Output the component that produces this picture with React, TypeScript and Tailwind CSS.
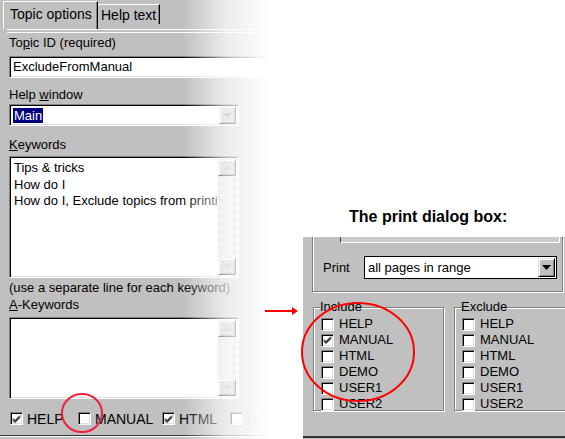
import React from 'react';

const sunken =
  'border border-t-[#808080] border-l-[#808080] border-r-white border-b-white shadow-[inset_1px_1px_0_#000,inset_-1px_-1px_0_#dfdfdf]';
const raised =
  'bg-[#c0c0c0] border border-t-[#dfdfdf] border-l-[#dfdfdf] border-r-black border-b-black shadow-[inset_1px_1px_0_#fff,inset_-1px_-1px_0_#808080]';

function Arrow({ dir, color }: { dir: 'up' | 'down'; color: string }) {
  return (
    <svg width="9" height="5" viewBox="0 0 9 5">
      {dir === 'up' ? (
        <polygon points="4.5,0 9,5 0,5" fill={color} />
      ) : (
        <polygon points="0,0 9,0 4.5,5" fill={color} />
      )}
    </svg>
  );
}

function Check({ checked }: { checked?: boolean }) {
  return (
    <span className={`w-[13px] h-[13px] shrink-0 bg-white flex items-center justify-center ${sunken}`}>
      {checked && (
        <svg width="9" height="8" viewBox="0 0 9 8">
          <path d="M1 3.5 L3 5.5 L8 0.5 M1 4.5 L3 6.5 L8 1.5 M1 5.5 L3 7.5 L8 2.5" stroke="#000" strokeWidth="1" fill="none" />
        </svg>
      )}
    </span>
  );
}

function Scrollbar() {
  return (
    <div className="w-[18px] h-full flex flex-col [background:repeating-conic-gradient(#c0c0c0_0%_25%,#fff_0%_50%)_0_0/2px_2px]">
      <div className={`h-[17px] flex items-center justify-center ${raised}`}>
        <Arrow dir="up" color="#a0a0a0" />
      </div>
      <div className="flex-1" />
      <div className={`h-[17px] flex items-center justify-center ${raised}`}>
        <Arrow dir="down" color="#a0a0a0" />
      </div>
    </div>
  );
}

const leftChecks = [
  { label: 'HELP', checked: true, w: 'w-[68px]' },
  { label: 'MANUAL', checked: false, w: 'w-[84px]' },
  { label: 'HTML', checked: true, w: 'w-[68px]' },
  { label: 'DEMO', checked: false, w: 'w-[60px]', disabled: true },
];

const options = ['HELP', 'MANUAL', 'HTML', 'DEMO', 'USER1', 'USER2'];

function Group({ title, checked }: { title: string; checked?: string }) {
  return (
    <fieldset className="w-[131px] h-[112px] border border-[#808080] shadow-[inset_1px_1px_0_#fff,1px_1px_0_#fff] pl-[7px] pt-[1px]">
      <legend className="-ml-[1px] px-0 leading-[16px] bg-[#c0c0c0]">{title}</legend>
      <div className="flex flex-col">
        {options.map((o) => (
          <div key={o} className="flex items-center h-[16px] gap-[5px]">
            <Check checked={o === checked} />
            <span className="leading-[16px]">{o}</span>
          </div>
        ))}
      </div>
    </fieldset>
  );
}

export default function App() {
  return (
    <div className="relative w-[565px] h-[439px] bg-white flex overflow-hidden text-[13px] text-black font-['Liberation_Sans',Arial,sans-serif]">
      {/* Left: topic options panel */}
      <div className="relative w-[270px] h-full shrink-0 bg-[#c0c0c0] overflow-hidden">
        {/* Tabs */}
        <div className="flex items-start pt-[1px] pl-[3px] h-[29px]">
          <div className="w-[95px] h-[28px] border-l border-t border-white border-r border-r-black shadow-[inset_-1px_0_0_#808080] rounded-tl-[2px] pl-[6px] pt-[4px] leading-[16px] text-[14px]">
            Topic options
          </div>
          <div className="mt-[3px] w-[62px] h-[20px] border-t border-white border-r border-r-black shadow-[inset_-1px_0_0_#808080] pl-[3px] pt-[2px] leading-[16px] text-[14px]">
            Help text
          </div>
        </div>
        <div className="ml-[7px] h-[4px] border-t border-white border-b border-b-white bg-[#808080] pt-[1px] pb-[1px] bg-clip-content" />

        <div className="pl-[9px]">
          <div className="mt-[2px] leading-[16px]">
            To<span className="underline">p</span>ic ID (required)
          </div>
          <div className={`mt-[5px] w-[270px] h-[22px] bg-white pl-[3px] leading-[20px] ${sunken}`}>ExcludeFromManual</div>

          <div className="mt-[9px] leading-[16px]">
            Help <span className="underline">w</span>indow
          </div>
          <div className={`mt-[1px] w-[230px] h-[22px] bg-white flex items-center pl-[3px] pr-[2px] ${sunken}`}>
            <span className="bg-[#000080] text-white leading-[15px] px-[1px]">Main</span>
            <div className="flex-1" />
            <div className={`w-[17px] h-[18px] flex items-center justify-center ${raised}`}>
              <Arrow dir="down" color="#808080" />
            </div>
          </div>

          <div className="mt-[11px] leading-[16px]">
            <span className="underline">K</span>eywords
          </div>
          <div className={`mt-[3px] w-[230px] h-[122px] bg-white flex p-[2px] ${sunken}`}>
            <div className="flex-1 pl-[2px] pt-[1px] leading-[16.5px] whitespace-nowrap overflow-hidden">
              <div>Tips &amp; tricks</div>
              <div>How do I</div>
              <div>How do I, Exclude topics from printing</div>
            </div>
            <Scrollbar />
          </div>

          <div className="mt-[2px] leading-[16px] whitespace-nowrap">(use a separate line for each keyword)</div>
          <div className="mt-[1px] leading-[16px]">
            <span className="underline">A</span>-Keywords
          </div>
          <div className={`mt-[4px] w-[230px] h-[82px] bg-white flex p-[2px] ${sunken}`}>
            <div className="flex-1" />
            <Scrollbar />
          </div>

          <div className="mt-[13px] flex items-center h-[13px] pl-[1px]">
            {leftChecks.map((c) => (
              <div key={c.label} className={`flex items-center gap-[4px] shrink-0 ${c.w}`}>
                <Check checked={c.checked} />
                <span className={`leading-[16px] text-[14px] ${c.disabled ? 'text-[#9a9a9a]' : ''}`}>{c.label}</span>
              </div>
            ))}
          </div>
        </div>
        <div className="mt-[10px] h-[2px] bg-[#303030] border-b border-white" />

        {/* fade to white */}
        <div className="absolute top-0 bottom-0 left-[182px] w-[88px] bg-linear-to-r from-white/0 via-white/70 to-white" />
      </div>

      {/* Right: print dialog */}
      <div className="flex-1 flex flex-col">
        <div className="mt-[208px] pl-[79px] h-[29px] text-[16px] font-bold leading-[18px] whitespace-nowrap">
          The print dialog box:
        </div>
        <div className="ml-[33px] flex-1 bg-[#c0c0c0] flex flex-col">
          <div className="ml-[9px] w-[251px] h-[55px] border-l border-b border-r border-[#808080] shadow-[inset_1px_0_0_#fff,1px_1px_0_#fff]">
            <div className="ml-[27px] w-[220px] h-[6px] border-l border-l-[#404040] border-b border-b-white border-r border-r-white bg-[#cbcbcb]" />
            <div className="mt-[13px] flex items-center">
              <span className="ml-[10px] w-[41px] leading-[16px]">Print</span>
              <div className="w-[193px] h-[23px] bg-white border border-black flex items-center pl-[3px] pr-[1px]">
                <span className="flex-1 leading-[16px]">all pages in range</span>
                <div className={`w-[17px] h-[19px] flex items-center justify-center ${raised}`}>
                  <Arrow dir="down" color="#000" />
                </div>
              </div>
            </div>
          </div>
          <div className="mt-[7px] ml-[10px] flex gap-[10px]">
            <Group title="Include" checked="MANUAL" />
            <Group title="Exclude" />
          </div>
          <div className="mt-auto mb-[1px] h-[2px] bg-[#303030]" />
        </div>
      </div>

      {/* Red annotations */}
      <svg className="absolute inset-0 pointer-events-none" width="565" height="439" viewBox="0 0 565 439">
        <ellipse cx="358" cy="352" rx="56" ry="49" fill="none" stroke="#f00" strokeWidth="2" />
        <ellipse cx="82" cy="413" rx="20" ry="19" fill="none" stroke="#f0203a" strokeWidth="2" />
        <line x1="265" y1="311" x2="293" y2="311" stroke="#f00" strokeWidth="2" />
        <polygon points="292,307 298,311 292,315" fill="#f00" />
      </svg>
    </div>
  );
}
